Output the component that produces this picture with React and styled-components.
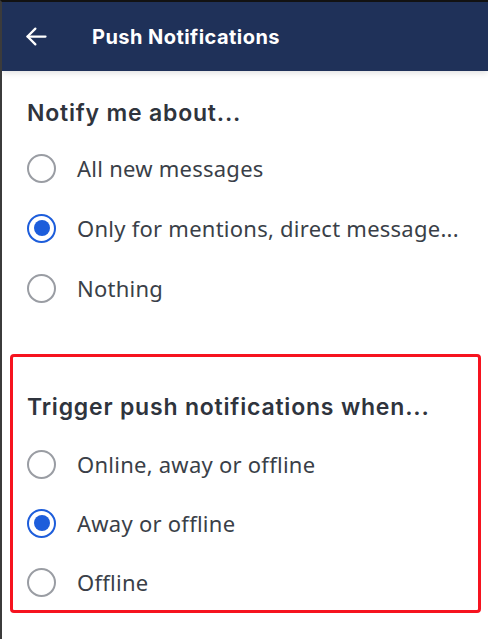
import { useState } from "react";
import styled, { createGlobalStyle } from "styled-components";

const GlobalStyle = createGlobalStyle`
  html, body {
    margin: 0;
    padding: 0;
    background: #ffffff;
  }
  * {
    box-sizing: border-box;
  }
`;

const Screen = styled.div`
  width: 488px;
  height: 639px;
  overflow: hidden;
  background: #ffffff;
  border-top: 2px solid #121212;
  border-left: 2px solid #3b3b3b;
  font-family: "Noto Sans", "Open Sans", sans-serif;
`;

const Header = styled.header`
  display: flex;
  align-items: center;
  height: 69px;
  padding-left: 21px;
  background: #1f3159;
  color: #ffffff;
  box-shadow: 0 2px 6px rgba(0, 0, 0, 0.12);
`;

const BackButton = styled.button`
  display: flex;
  align-items: center;
  justify-content: center;
  width: 27px;
  height: 27px;
  padding: 0;
  margin-right: 42px;
  border: none;
  background: none;
  color: #ffffff;
  cursor: pointer;
`;

const Title = styled.h1`
  margin: 0;
  font-family: Inter, "Noto Sans", sans-serif;
  font-size: 20px;
  font-weight: 700;
  letter-spacing: 0.45px;
`;

const Group = styled.section`
  display: flex;
  flex-direction: column;
  gap: ${({ gap }) => gap}px;
  margin: ${({ outlined }) => (outlined ? "39px 7px 0 8px" : "0")};
  padding: ${({ outlined }) => (outlined ? "35px 0 1px 14px" : "27px 0 0 25px")};
  border: ${({ outlined }) => (outlined ? "3px solid #f6131f" : "none")};
  border-radius: 4px;
`;

const GroupTitle = styled.h2`
  margin: 0;
  height: 30px;
  line-height: 30px;
  font-family: Inter, "Noto Sans", sans-serif;
  font-size: 23px;
  font-weight: 600;
  color: #2f343d;
  letter-spacing: 0.8px;
`;

const OptionList = styled.div`
  display: flex;
  flex-direction: column;
  gap: ${({ gap }) => gap}px;
`;

const Option = styled.label`
  display: flex;
  align-items: center;
  height: 54px;
  cursor: pointer;
`;

const Radio = styled.span`
  flex: none;
  display: flex;
  align-items: center;
  justify-content: center;
  width: 29px;
  height: 29px;
  border-radius: 50%;
  border: 2.5px solid ${({ checked }) => (checked ? "#1d5ddb" : "#9a9da3")};

  &::after {
    content: "";
    display: ${({ checked }) => (checked ? "block" : "none")};
    width: 16px;
    height: 16px;
    border-radius: 50%;
    background: #1d5ddb;
  }
`;

const Label = styled.span`
  margin-left: 21px;
  font-size: 22px;
  letter-spacing: 0.25px;
  color: #3a3f48;
  white-space: nowrap;
`;

function RadioGroup({ title, options, initial, outlined, titleGap, rowGap }) {
  const [value, setValue] = useState(initial);

  return (
    <Group outlined={outlined} gap={titleGap}>
      <GroupTitle>{title}</GroupTitle>
      <OptionList gap={rowGap}>
        {options.map((opt) => (
          <Option key={opt} onClick={() => setValue(opt)}>
            <Radio checked={value === opt} />
            <Label>{opt}</Label>
          </Option>
        ))}
      </OptionList>
    </Group>
  );
}

const notifyOptions = [
  "All new messages",
  "Only for mentions, direct message...",
  "Nothing",
];

const triggerOptions = ["Online, away or offline", "Away or offline", "Offline"];

export default function App() {
  return (
    <>
      <GlobalStyle />
      <Screen>
        <Header>
          <BackButton aria-label="Back">
            <svg width="27" height="27" viewBox="0 0 24 24" fill="none" stroke="currentColor" strokeWidth="2" strokeLinecap="round" strokeLinejoin="round">
              <path d="M20 12H4" />
              <path d="M11 5l-7 7 7 7" />
            </svg>
          </BackButton>
          <Title>Push Notifications</Title>
        </Header>
        <RadioGroup
          title="Notify me about..."
          options={notifyOptions}
          initial={notifyOptions[1]}
          titleGap={13}
          rowGap={6}
        />
        <RadioGroup
          outlined
          title="Trigger push notifications when..."
          options={triggerOptions}
          initial={triggerOptions[1]}
          titleGap={15}
          rowGap={5}
        />
      </Screen>
    </>
  );
}
